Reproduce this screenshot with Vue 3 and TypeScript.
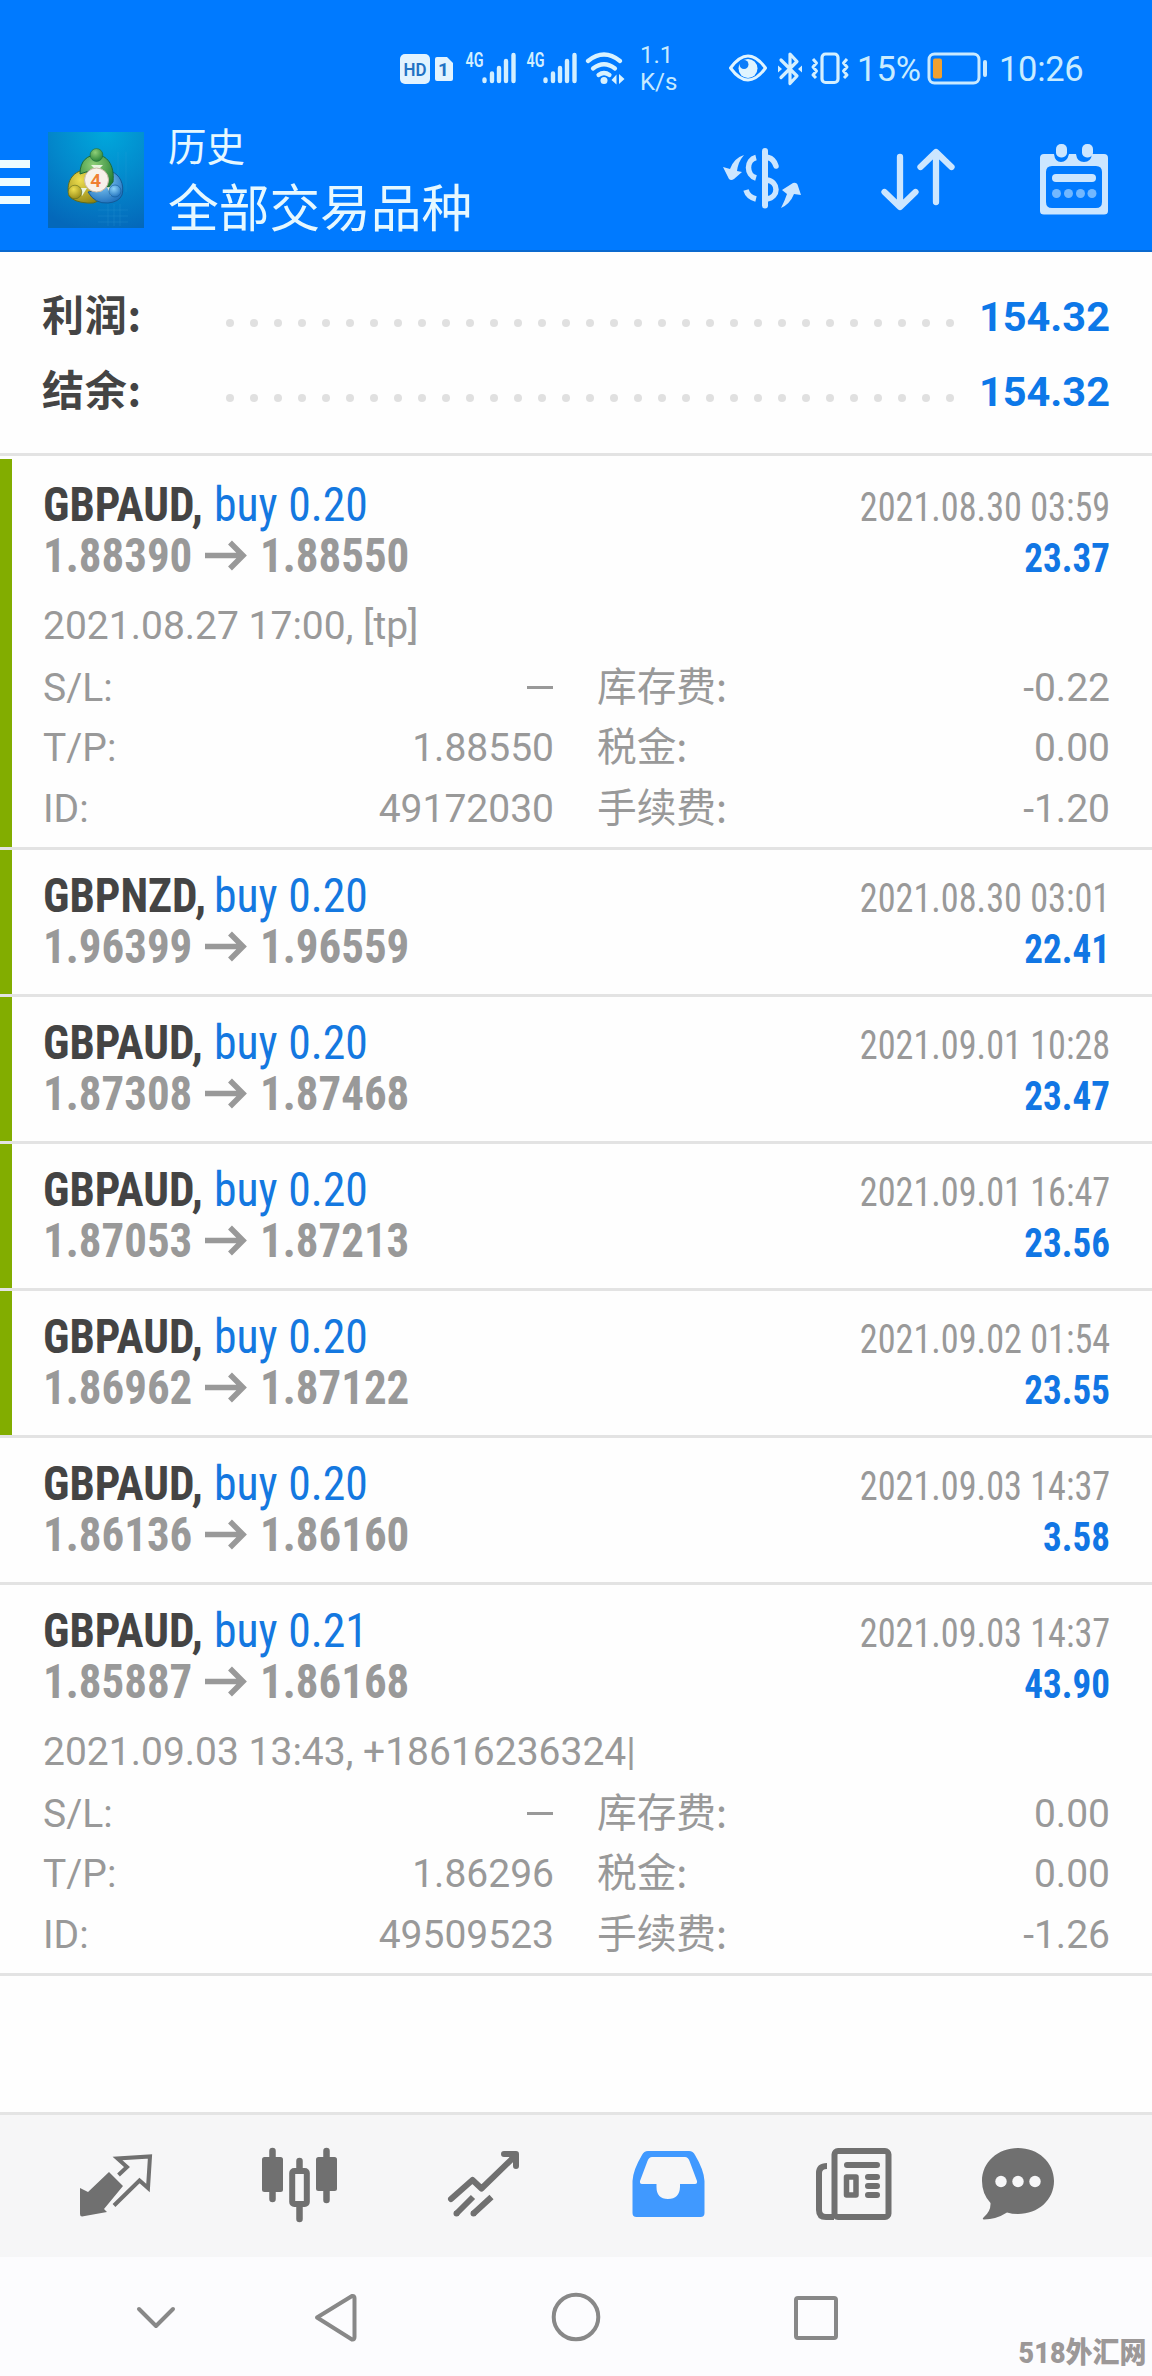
<script setup lang="ts">
interface Deal {
  symbol: string
  volume: string
  open: string
  close: string
  time: string
  profit: string
  marked: boolean
  details?: { comment: string; tp: string; id: string; swap: string; tax: string; fee: string }
}

const summary = [
  { label: '利润:', value: '154.32' },
  { label: '结余:', value: '154.32' },
]

const deals: Deal[] = [
  {
    symbol: 'GBPAUD,', volume: 'buy 0.20', open: '1.88390', close: '1.88550', time: '2021.08.30 03:59', profit: '23.37', marked: true,
    details: { comment: '2021.08.27 17:00, [tp]', tp: '1.88550', id: '49172030', swap: '-0.22', tax: '0.00', fee: '-1.20' },
  },
  { symbol: 'GBPNZD,', volume: 'buy 0.20', open: '1.96399', close: '1.96559', time: '2021.08.30 03:01', profit: '22.41', marked: true },
  { symbol: 'GBPAUD,', volume: 'buy 0.20', open: '1.87308', close: '1.87468', time: '2021.09.01 10:28', profit: '23.47', marked: true },
  { symbol: 'GBPAUD,', volume: 'buy 0.20', open: '1.87053', close: '1.87213', time: '2021.09.01 16:47', profit: '23.56', marked: true },
  { symbol: 'GBPAUD,', volume: 'buy 0.20', open: '1.86962', close: '1.87122', time: '2021.09.02 01:54', profit: '23.55', marked: true },
  { symbol: 'GBPAUD,', volume: 'buy 0.20', open: '1.86136', close: '1.86160', time: '2021.09.03 14:37', profit: '3.58', marked: false },
  {
    symbol: 'GBPAUD,', volume: 'buy 0.21', open: '1.85887', close: '1.86168', time: '2021.09.03 14:37', profit: '43.90', marked: false,
    details: { comment: '2021.09.03 13:43, +18616236324|', tp: '1.86296', id: '49509523', swap: '0.00', tax: '0.00', fee: '-1.26' },
  },
]

const dots = Array.from({ length: 31 }, (_, i) => i)
</script>

<template>
  <div class="screen">
    <header class="header">
      <div class="status">
        <svg class="s-hd" width="56" height="36" viewBox="400 50 56 36">
          <rect x="400" y="53" width="30" height="30" rx="5" fill="#e2f3ff" />
          <text x="415" y="75" font-size="18" font-weight="600" text-anchor="middle" textLength="23" lengthAdjust="spacingAndGlyphs" fill="#2272c4">HD</text>
          <path d="M437 56h10l6 6v16q0 2-2 2h-14q-2 0-2-2v-20q0-2 2-2z" fill="#e2f3ff" />
          <text x="443.500" y="75" font-size="19" font-weight="700" text-anchor="middle" fill="#2272c4">1</text>
        </svg>
        <svg v-for="n in 2" :key="n" class="s-sig" width="53" height="48" viewBox="465 44 53 48">
          <text x="465.500" y="65.500" font-size="20" font-weight="600" textLength="18" lengthAdjust="spacingAndGlyphs" fill="#d3efff">4G</text>
          <path d="M484.500 78.500v1.500M492 72.500v7.500M499 67v13M506 60v20M513.500 54v26" stroke="#d3efff" stroke-width="4.400" stroke-linecap="round" />
        </svg>
        <svg class="s-wifi" width="42" height="36" viewBox="585 50 42 36">
          <g fill="none" stroke="#d8f2ff" stroke-width="4.200" stroke-linecap="round">
            <path d="M588 60Q604 47 620 60" /><path d="M593 67.500Q604 59 615 67.500" /><path d="M598.500 74Q604 70 609.500 74" />
          </g>
          <circle cx="604" cy="79.500" r="3.500" fill="#d8f2ff" />
          <path d="M616.500 73.500v10l-5-4.500zM619 73v10l5.500-5z" fill="#d8f2ff" />
        </svg>
        <div class="rate"><span>1.1</span><span>K/s</span></div>
        <svg class="s-eye" width="40" height="36" viewBox="728 50 40 36">
          <path d="M730.500 67Q748 43 765.500 67Q748 91 730.500 67z" fill="none" stroke="#dff4ff" stroke-width="3" stroke-linejoin="round" />
          <circle cx="748" cy="67.500" r="9.500" fill="#dff4ff" />
          <circle cx="744" cy="63.500" r="4.500" fill="#0a7cfa" />
        </svg>
        <svg class="s-bt" width="26" height="38" viewBox="777 48 26 38">
          <path d="M781 58l16 16-7 7.500V52l7 7.500-16 16" fill="none" stroke="#d3efff" stroke-width="3.200" stroke-linejoin="round" stroke-linecap="round" />
          <path d="M778 63.500l4 3.500-4 3.500zM802 63.500l-4 3.500 4 3.500z" fill="#d3efff" />
        </svg>
        <svg class="s-vib" width="40" height="36" viewBox="810 50 40 36">
          <rect x="822" y="53" width="16" height="28.500" rx="3.500" fill="none" stroke="#d3efff" stroke-width="3.200" />
          <path d="M813 58l3.500 4-3.500 4 3.500 4-3.500 4 3 3M847 58l-3.500 4 3.500 4-3.500 4 3.500 4-3 3" fill="none" stroke="#d3efff" stroke-width="3" stroke-linejoin="round" />
        </svg>
        <span class="pct">15%</span>
        <svg class="s-bat" width="62" height="36" viewBox="927 50 62 36">
          <rect x="929" y="53" width="50" height="29" rx="5.500" fill="none" stroke="#c9e9ff" stroke-width="3" />
          <rect x="933" y="57.500" width="9" height="20" rx="2" fill="#f0a030" />
          <rect x="983" y="59" width="4" height="17" rx="2" fill="#c9e9ff" />
        </svg>
        <span class="clock">10:26</span>
      </div>
      <div class="toolbar">
        <svg class="t-menu" width="30" height="44" viewBox="0 0 30 44"><path d="M0 0h30v8H0zM0 18h30v8H0zM0 36h30v8H0z" fill="#eefcff" /></svg>
        <svg class="t-logo" width="96" height="96" viewBox="0 0 96 96">
          <defs>
            <radialGradient id="bg" cx=".6" cy="0" r="1.050"><stop offset="0" stop-color="#00a8dc" /><stop offset=".5" stop-color="#0389cc" /><stop offset="1" stop-color="#0468ba" /></radialGradient>
            <radialGradient id="gr" cx=".4" cy=".3" r=".8"><stop offset="0" stop-color="#8fcf78" /><stop offset="1" stop-color="#1d7a30" /></radialGradient>
            <radialGradient id="ye" cx=".4" cy=".3" r=".8"><stop offset="0" stop-color="#efdf50" /><stop offset="1" stop-color="#8f8212" /></radialGradient>
            <radialGradient id="bl" cx=".4" cy=".3" r=".8"><stop offset="0" stop-color="#8cd3fa" /><stop offset="1" stop-color="#1668b8" /></radialGradient>
          </defs>
          <rect width="96" height="96" fill="url(#bg)" />
          <path d="M60 72v22M66 72v22M72 72v22M50 78h30M50 84h30M50 90h30M70 20v40M78 20v40" stroke="#3aa4dc" stroke-width=".6" opacity=".35" />
          <path d="M21 64C17 48 27 38 38 38L46 60 50 69Q46 72 39 71Q26 70 21 64z" fill="url(#ye)" stroke="#5d6c20" />
          <path d="M74 63C77 52 71 42 64 40L52 58 40 60Q47 72 60 71Q71 70 74 63z" fill="url(#bl)" stroke="#125a98" />
          <path d="M32 42C32 28 40 23 49 23S67 32 65 50L60 56 44 38z" fill="url(#gr)" stroke="#1d6a3a" />
          <path d="M43 33l6 6 6-6zM30 56l4 8 5-8zM59 55l4 9 4-8z" fill="#e8f4e0" />
          <circle cx="48.500" cy="23" r="6.400" fill="url(#gr)" stroke="#1d6a3a" stroke-width=".6" /><circle cx="27" cy="60" r="6.800" fill="url(#ye)" stroke="#5d6c20" stroke-width=".6" /><circle cx="67" cy="59" r="6" fill="url(#bl)" stroke="#125a98" stroke-width=".6" />
          <circle cx="48.500" cy="48" r="12" fill="#f7f1ea" stroke="#c9b9a5" />
          <text x="47.800" y="54.500" font-size="19" font-weight="600" text-anchor="middle" fill="#ef8032">4</text>
        </svg>
        <div class="titles"><span class="t1">历史</span><span class="t2">全部交易品种</span></div>
        <svg class="t-cur" width="80" height="64" viewBox="722 146 80 64">
          <g fill="none" stroke="#cce6ff" stroke-width="5.500">
            <path d="M765 151v54.500" stroke-width="6" stroke-linecap="round" />
            <path d="M756 157.500C746 160 746 175 756 178" /><path d="M746 190Q748 197 756 199" /><path d="M768 157.500Q774 159 776 166" stroke-linecap="round" /><path d="M767 180C779 182 779 197 767 199" />
          </g>
          <path d="M744 155Q734 158 730 169L723 167L729 179Q731 181 734 179L742 172L737 171Q738 162 744 155z" fill="#cce6ff" />
          <path d="M781 208Q785 200 787 194L782 190L793 183Q797 182 798 186L801 195L794 194Q790 204 781 208z" fill="#cce6ff" />
        </svg>
        <svg class="t-sort" width="76" height="66" viewBox="880 147 76 66">
          <path d="M900 157v49M884.500 192l15.500 15 15.500-15M936 202v-49M920.500 167l15.500-15 15.500 15" fill="none" stroke="#cce6ff" stroke-width="6.300" stroke-linecap="round" stroke-linejoin="round" />
        </svg>
        <svg class="t-cal" width="70" height="74" viewBox="1039 143 70 74">
          <path fill-rule="evenodd" d="M1044 154h10q1 8 7 8t8-8h7q1 8 8 8t8-8h12q4 0 4 4v53q0 3.500-4 3.500h-60q-4 0-4-3.500v-53q0-4 4-4zM1052 166q-6 0-6 6v30q0 6 6 6h44q6 0 6-6v-30q0-6-6-6z" fill="#cce6ff" />
          <rect x="1056" y="144" width="11" height="13.500" rx="5" fill="#cce6ff" /><rect x="1082" y="144" width="11" height="13.500" rx="5" fill="#cce6ff" />
          <rect x="1052" y="174" width="44" height="8" rx="4" fill="#cce6ff" />
          <g fill="#72b8ff"><circle cx="1056.500" cy="193.500" r="4.500" /><circle cx="1068.500" cy="193.500" r="4.500" /><circle cx="1080.500" cy="193.500" r="4.500" /><circle cx="1092" cy="193.500" r="4.500" /></g>
        </svg>
      </div>
    </header>

    <section class="summary">
      <div v-for="s in summary" :key="s.label" class="sum-row">
        <span class="sum-label">{{ s.label }}</span>
        <span class="leader"><i v-for="d in dots" :key="d"></i></span>
        <span class="sum-value">{{ s.value }}</span>
      </div>
    </section>

    <main class="list">
      <article v-for="(d, i) in deals" :key="i" class="deal" :class="{ marked: d.marked }">
        <div class="line">
          <span class="sym">{{ d.symbol }}</span><span class="vol">{{ d.volume }}</span>
          <span class="time">{{ d.time }}</span>
        </div>
        <div class="line">
          <span class="price">{{ d.open }}</span>
          <svg class="arrow" width="42" height="32" viewBox="0 0 42 32"><path d="M0 15.500h38M25 2.500l13 13-13 13" fill="none" stroke="#999" stroke-width="5.500" /></svg>
          <span class="price">{{ d.close }}</span>
          <span class="profit">{{ d.profit }}</span>
        </div>
        <div v-if="d.details" class="details">
          <div class="comment">{{ d.details.comment }}</div>
          <div class="drow"><span class="k">S/L:</span><span class="v"><b class="dash"></b></span><span class="k2">库存费:</span><span class="v2">{{ d.details.swap }}</span></div>
          <div class="drow"><span class="k">T/P:</span><span class="v">{{ d.details.tp }}</span><span class="k2">税金:</span><span class="v2">{{ d.details.tax }}</span></div>
          <div class="drow"><span class="k">ID:</span><span class="v">{{ d.details.id }}</span><span class="k2">手续费:</span><span class="v2">{{ d.details.fee }}</span></div>
        </div>
      </article>
    </main>

    <nav class="tabs">
      <svg width="80" height="80" viewBox="76 2144 80 80">
        <path d="M109 2172L123 2186L104 2209L107 2212L82 2216.500Q80 2216.500 80 2214V2188L88 2192z" fill="#707070" />
        <path d="M118.500 2175L127 2167L117.500 2158.500L150 2156.500L148 2188L139.500 2180.500L114 2205.500" fill="none" stroke="#707070" stroke-width="4" />
      </svg>
      <svg width="80" height="80" viewBox="260 2144 80 80">
        <path d="M272.500 2151v48M326.500 2151v49M299.500 2161v10M299.500 2206v13" stroke="#707070" stroke-width="6.500" stroke-linecap="round" />
        <rect x="262" y="2157" width="21" height="35" rx="2.500" fill="#707070" /><rect x="316" y="2157" width="21" height="34" rx="2.500" fill="#707070" />
        <rect x="292.200" y="2171" width="14.600" height="33" rx="2" fill="#f6f6f7" stroke="#707070" stroke-width="6" />
      </svg>
      <svg width="80" height="80" viewBox="445 2144 80 80">
        <path d="M451 2199L472.500 2180L481.500 2188.500L515 2156M504 2154H516V2166" fill="none" stroke="#707070" stroke-width="6" stroke-linecap="round" stroke-linejoin="round" />
        <path d="M473 2197L456 2214M491.500 2197L473 2214" fill="none" stroke="#707070" stroke-width="6" /><circle cx="456.500" cy="2213.500" r="3" fill="#707070" /><circle cx="473.500" cy="2213.500" r="3" fill="#707070" />
      </svg>
      <svg width="80" height="80" viewBox="629 2144 80 80">
        <path fill-rule="evenodd" d="M648 2151h41q4 0 6 4q9 15 9.500 26v32q0 4-4 4h-64q-4 0-4-4v-32q.5-11 9.500-26q2-4 6-4zM652 2157q-3 0-4.500 4L640 2181q-.5 3 2 3h14.500v3q0 12 11.500 12t12-12v-3h15q2.500 0 2-3l-7.500-20q-1.500-4-4.500-4z" fill="#4099ff" />
      </svg>
      <svg width="80" height="80" viewBox="814 2144 80 80">
        <path d="M827 2166Q819 2166 819 2173V2210Q819 2217 826 2217H834" fill="none" stroke="#707070" stroke-width="6" />
        <rect x="834.500" y="2151" width="54" height="66" rx="3.500" fill="none" stroke="#707070" stroke-width="6" />
        <path d="M847 2165h30M868 2177h9M868 2186h9M868 2195h9" stroke="#707070" stroke-width="6" stroke-linecap="round" />
        <rect x="846.500" y="2177" width="9.500" height="18" fill="none" stroke="#707070" stroke-width="5.500" stroke-linejoin="round" />
      </svg>
      <svg class="chat" width="80" height="80" viewBox="978 2144 80 80">
        <path d="M1018 2148C1038 2148 1054 2162 1054 2181S1038 2214 1018 2214Q1012 2214 1007 2212.500Q996 2219.500 984 2219.500Q981.500 2219 984 2217Q991 2211 990.500 2203Q982 2194 982 2181C982 2162 998 2148 1018 2148z" fill="#707070" />
        <g fill="#f7f7f8"><circle cx="1001" cy="2181.500" r="5.700" /><circle cx="1018" cy="2181.500" r="5.700" /><circle cx="1035" cy="2181.500" r="5.700" /></g>
      </svg>
    </nav>

    <footer class="sysnav">
      <svg class="n1" width="44" height="56" viewBox="134 2290 44 56"><path d="M139 2309l17 17 17-17" fill="none" stroke="#888" stroke-width="4" stroke-linecap="round" stroke-linejoin="round" /></svg>
      <svg class="n2" width="48" height="56" viewBox="312 2290 48 56"><path d="M317 2317.500L352 2296q2.500-.5 2.500 2v39q0 3-2.500 2.500z" fill="none" stroke="#888" stroke-width="4" stroke-linejoin="round" /></svg>
      <svg class="n3" width="52" height="56" viewBox="550 2290 52 56"><circle cx="576" cy="2317" r="22.300" fill="none" stroke="#888" stroke-width="4" /></svg>
      <svg class="n4" width="48" height="56" viewBox="792 2290 48 56"><rect x="796" y="2298" width="40" height="40" rx="2" fill="none" stroke="#888" stroke-width="4" /></svg>
      <span class="mark">518外汇网</span>
    </footer>
  </div>
</template>

<style>
body { margin: 0; background: #fdfdfe; }
</style>

<style scoped>
.screen { width: 1152px; height: 2376px; display: flex; flex-direction: column; background: #fefefe; font-family: Roboto, "Noto Sans CJK SC", sans-serif; overflow: hidden; }
svg { display: block; flex: none; }
.header { height: 252px; flex: none; box-sizing: border-box; background: #007aff; border-bottom: 2px solid #0b69cf; color: #e6f8ff; }
.status { display: flex; height: 88px; padding: 49px 0 0 400px; align-items: center; box-sizing: border-box; }
.s-sig { margin-left: 8px; }
.s-hd { margin-right: 1px; }
.s-wifi { margin-left: 6px; }
.rate { width: 40px; margin-left: 13px; display: flex; flex-direction: column; font-size: 24px; line-height: 27px; color: #c6eaff; }
.s-eye { margin-left: 48px; }
.s-bt { margin-left: 9px; }
.s-vib { margin-left: 7px; }
.pct { width: 64px; margin-left: 7px; font-size: 34.5px; color: #c9ecff; white-space: nowrap; }
.s-bat { margin-left: 6px; }
.clock { margin-left: 10px; font-size: 34.5px; letter-spacing: -0.3px; color: #c9ecff; }
.toolbar { display: flex; height: 162px; align-items: flex-start; }
.t-menu { margin-top: 72px; }
.t-logo { margin: 44px 0 0 18px; }
.titles { display: flex; flex-direction: column; margin: 34px 0 0 24px; width: 553px; }
.t1 { font-size: 38.5px; line-height: 52px; }
.t2 { font-size: 50.7px; line-height: 71px; }
.t-cur { margin: 58px 0 0 1px; }
.t-sort { margin: 59px 0 0 78px; }
.t-cal { margin: 55px 0 0 83px; }

.summary { height: 204px; flex: none; box-sizing: border-box; padding: 23px 42px 0; border-bottom: 3px solid #e3e3e3; }
.sum-row { display: flex; align-items: baseline; height: 75px; line-height: 75px; font-size: 42px; font-weight: 700; }
.sum-label { width: 184px; color: #444; font-family: "Noto Sans CJK SC", sans-serif; letter-spacing: 0.8px; }
.leader { display: flex; align-self: flex-start; width: 728px; justify-content: space-between; align-items: center; padding-top: 16px; height: 63px; flex: none; }
.leader i { width: 8px; height: 8px; border-radius: 4px; background: #e0e0e0; }
.sum-value { margin-left: auto; font-size: 41.5px; color: #0d78e8; }

.list { flex: 1; padding-top: 3px; }
.deal { box-sizing: border-box; height: 147px; padding: 21px 42px 0 43px; border-bottom: 3px solid #e3e3e3; position: relative; }
.deal:has(.details) { height: 391px; }
.marked::before { content: ""; position: absolute; left: 0; top: 0; bottom: 0; width: 12px; background: #82ad00; }
.line { display: flex; align-items: baseline; height: 51px; line-height: 51px; font-size: 47.5px; font-stretch: 75%; }
.sym { font-weight: 700; color: #444; width: 171px; transform: scaleX(0.951); transform-origin: left; }
.vol { color: #1478e0; transform: scaleX(0.962); transform-origin: left; }
.time { margin-left: auto; font-size: 39.8px; color: #999; transform: scaleX(0.91); transform-origin: right; }
.price { width: 161px; font-weight: 700; color: #999; transform: scaleX(0.946); transform-origin: left; white-space: nowrap; }
.profit { margin-left: auto; font-size: 39.8px; font-weight: 700; color: #1176e4; transform: scaleX(0.932); transform-origin: right; }
.arrow { margin: 0 13px 0 1px; }
.details { padding-top: 14px; font-size: 39px; line-height: 60.5px; color: #999; }
.comment { height: 57.5px; white-space: pre; }
.drow { display: flex; align-items: baseline; height: 60.5px; }
.k { width: 140px; }
.v { width: 371px; text-align: right; }
.k2 { margin-left: 43px; font-size: 39.7px; font-family: "Noto Sans CJK SC", sans-serif; }
.v2 { margin-left: auto; }
.dash { display: inline-block; width: 26px; height: 3px; background: #999; vertical-align: 12px; margin-right: 1px; }

.tabs { height: 145px; flex: none; box-sizing: border-box; border-top: 3px solid #e4e4e4; background: #f6f6f7; display: flex; justify-content: space-between; padding: 29px 94px 0 76px; }
.chat { margin-left: -20px; }
.sysnav { height: 119px; flex: none; background: #fcfcfe; display: flex; position: relative; padding-top: 33px; box-sizing: border-box; }
.n1 { margin-left: 134px; }
.n2 { margin-left: 134px; }
.n3 { margin-left: 190px; }
.n4 { margin-left: 190px; }
.mark { position: absolute; right: 6px; bottom: 3px; font-size: 29px; line-height: 40px; font-weight: 900; color: #9c9898; transform: scaleX(0.93); transform-origin: right; }
</style>
